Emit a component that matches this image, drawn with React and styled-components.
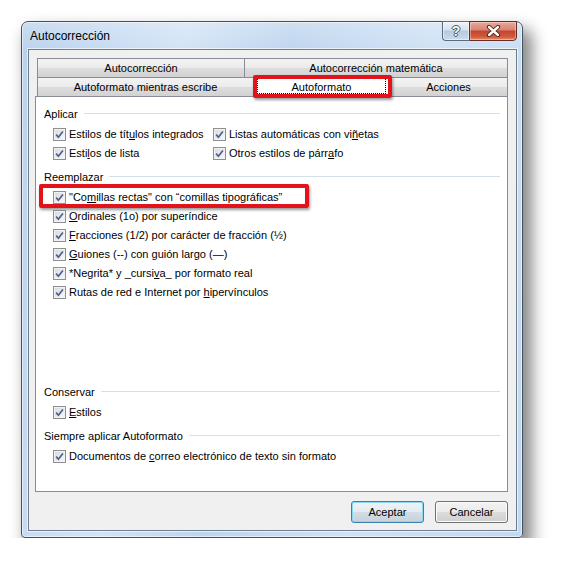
import React from 'react'
import styled, { createGlobalStyle } from 'styled-components'

const GlobalStyle = createGlobalStyle`
  html, body {
    margin: 0;
    background: #fff;
  }
  body {
    font-family: "Liberation Sans", Arial, sans-serif;
    color: #000;
  }
`

const topTabs = [
  { label: 'Autocorrección', width: 208 },
  { label: 'Autocorrección matemática', width: 264 }
]

const bottomTabs = [
  { label: 'Autoformato mientras escribe', width: 217 },
  { label: 'Autoformato', width: 137, selected: true },
  { label: 'Acciones', width: 119 }
]

const Check = () => (
  <Box>
    <svg width="11" height="11" viewBox="0 0 11 11">
      <path d="M2.2 5.6 L4.4 8.2 L8.9 2.4" fill="none" stroke="#4b5f97" strokeWidth="1.7" />
    </svg>
  </Box>
)

const CheckItem = ({ highlighted, children }) => (
  <Row $highlighted={highlighted}>
    <Check />
    <Label>{children}</Label>
  </Row>
)

const Group = ({ title, minHeight, children }) => (
  <Section style={minHeight ? { minHeight } : undefined}>
    <Heading>
      <span>{title}</span>
      <Rule />
    </Heading>
    {children}
  </Section>
)

const App = () => (
  <>
    <GlobalStyle />
    <Page>
      <Window>
        <TitleBar>
          <Title>Autocorrección</Title>
          <Caption>
            <HelpButton>?</HelpButton>
            <CloseButton>
              <svg width="15" height="12" viewBox="0 0 15 12">
                <path d="M3 2 L12 10 M12 2 L3 10" stroke="#4a1c16" strokeWidth="4.2" strokeLinecap="round" />
                <path d="M3 2 L12 10 M12 2 L3 10" stroke="#fff" strokeWidth="2.4" strokeLinecap="round" />
              </svg>
            </CloseButton>
          </Caption>
        </TitleBar>

        <Client>
          <TabRow>
            {topTabs.map(tab => (
              <Tab key={tab.label} $width={tab.width}>{tab.label}</Tab>
            ))}
          </TabRow>
          <TabRow>
            {bottomTabs.map(tab => (
              <Tab key={tab.label} $width={tab.width} $selected={tab.selected}>
                {tab.label}
              </Tab>
            ))}
          </TabRow>

          <Panel>
            <Group title="Aplicar">
              <Columns>
                <CheckItem>Estilos de tít<u>u</u>los integrados</CheckItem>
                <CheckItem>Listas automáticas con vi<u>ñ</u>etas</CheckItem>
                <CheckItem>Esti<u>l</u>os de lista</CheckItem>
                <CheckItem>Otros estilos de párr<u>a</u>fo</CheckItem>
              </Columns>
            </Group>

            <Group title="Reemplazar" minHeight={211}>
              <CheckItem highlighted>"Co<u>m</u>illas rectas" con “comillas tipográficas”</CheckItem>
              <CheckItem><u>O</u>rdinales (1o) por superíndice</CheckItem>
              <CheckItem><u>F</u>racciones (1/2) por carácter de fracción (½)</CheckItem>
              <CheckItem><u>G</u>uiones (--) con guión largo (—)</CheckItem>
              <CheckItem>*Negrita* y _cursi<u>v</u>a_ por formato real</CheckItem>
              <CheckItem>Rutas de red e Internet por <u>h</u>ipervínculos</CheckItem>
            </Group>

            <Group title="Conservar">
              <CheckItem><u>E</u>stilos</CheckItem>
            </Group>

            <Group title="Siempre aplicar Autoformato">
              <CheckItem>Documentos de <u>c</u>orreo electrónico de texto sin formato</CheckItem>
            </Group>
          </Panel>

          <Footer>
            <Button $default>Aceptar</Button>
            <Button>Cancelar</Button>
          </Footer>
        </Client>
      </Window>
    </Page>
  </>
)

const Page = styled.div`
  padding: 21px 0 0 21px;
`

const Window = styled.div`
  box-sizing: border-box;
  width: 502px;
  height: 517px;
  display: flex;
  flex-direction: column;
  border: 1px solid #46515e;
  border-radius: 7px 7px 4px 4px;
  background:
    linear-gradient(rgba(255, 255, 255, 0.25), rgba(255, 255, 255, 0) 30px),
    linear-gradient(100deg, #b9d2ed 0%, #d2e3f6 28%, #bed5ee 46%, #cfe1f5 70%, #c3d9f1 100%);
  box-shadow:
    inset 0 0 0 1px rgba(255, 255, 255, 0.55),
    7px 10px 16px 2px rgba(0, 0, 0, 0.48);
`

const TitleBar = styled.div`
  height: 27px;
  display: flex;
  align-items: center;
  justify-content: space-between;
  padding-left: 8px;
`

const Title = styled.span`
  font-size: 12px;
  padding-top: 1px;
`

const Caption = styled.div`
  display: flex;
  align-self: flex-start;
  margin-top: -1px;
  margin-right: 5px;
`

const HelpButton = styled.div`
  box-sizing: border-box;
  width: 27px;
  height: 20px;
  display: flex;
  align-items: center;
  justify-content: center;
  border: 1px solid #5d6b7c;
  border-right: none;
  border-radius: 0 0 0 4px;
  background: linear-gradient(#eef3f9, #d6e1ee 45%, #b8c9dd 50%, #c9dbef 100%);
  box-shadow: inset 0 0 0 1px rgba(255, 255, 255, 0.5);
  font-size: 14px;
  font-weight: bold;
  color: #f4f6f8;
  text-shadow:
    1px 0 0 #4d5a6a, -1px 0 0 #4d5a6a, 0 1px 0 #4d5a6a, 0 -1px 0 #4d5a6a;
`

const CloseButton = styled.div`
  box-sizing: border-box;
  width: 48px;
  height: 20px;
  display: flex;
  align-items: center;
  justify-content: center;
  border: 1px solid #6b2a22;
  border-radius: 0 0 4px 0;
  background: linear-gradient(#e9a898, #d98371 45%, #c4432f 50%, #cc5a3d 80%, #e3905f 100%);
  box-shadow: inset 0 0 0 1px rgba(255, 255, 255, 0.35);
`

const Client = styled.div`
  flex: 1;
  display: flex;
  flex-direction: column;
  margin: 0 5px 6px 6px;
  padding: 8px 8px 7px 6px;
  border: 1px solid #6f7e8e;
  background: #f0f0f0;
  box-shadow: 0 0 0 1px rgba(255, 255, 255, 0.6);
`

const TabRow = styled.div`
  display: flex;
  padding-left: 2px;
`

const Tab = styled.div`
  position: relative;
  box-sizing: border-box;
  flex: none;
  width: ${p => p.$width}px;
  height: ${p => (p.$selected ? 20 : 19)}px;
  margin-bottom: ${p => (p.$selected ? -1 : 0)}px;
  border: 1px solid #898c95;
  border-bottom: none;
  background: ${p =>
    p.$selected
      ? '#fff'
      : 'linear-gradient(#f3f3f3, #ebebeb 50%, #dedede 50%, #d2d2d2)'};
  z-index: ${p => (p.$selected ? 2 : 0)};
  font-size: 11px;
  line-height: 18px;
  text-align: center;
  white-space: nowrap;

  & + & {
    margin-left: -1px;
  }

  ${p =>
    p.$selected &&
    `
    &::before {
      content: '';
      position: absolute;
      inset: 0 3px 3px 3px;
      border: 1px dotted #000;
    }
    &::after {
      content: '';
      position: absolute;
      top: -3px;
      bottom: -1px;
      left: -1px;
      right: -3px;
      border: 4px solid #e3131b;
      border-radius: 2px;
      box-shadow: 1px 2px 3px rgba(0, 0, 0, 0.4);
      pointer-events: none;
    }
  `}
`

const Panel = styled.div`
  box-sizing: border-box;
  height: 396px;
  padding: 7px 7px 0 8px;
  border: 1px solid #898c95;
  background: #fff;
  font-size: 11px;
`

const Section = styled.div`
  & + & {
    margin-top: 4px;
  }
`

const Heading = styled.div`
  display: flex;
  align-items: center;
  gap: 6px;
  height: 19px;
  margin-bottom: 2px;
`

const Rule = styled.div`
  flex: 1;
  height: 1px;
  background: #d5dfe8;
`

const Columns = styled.div`
  display: grid;
  grid-template-columns: 160px auto;
`

const Row = styled.div`
  position: relative;
  display: flex;
  align-items: center;
  gap: 3px;
  width: fit-content;
  height: 19px;
  margin-left: 9px;
  white-space: nowrap;

  ${p =>
    p.$highlighted &&
    `
    &::after {
      content: '';
      position: absolute;
      top: -4px;
      bottom: -1px;
      left: -14px;
      right: -27px;
      border: 4px solid #e3131b;
      border-radius: 2px;
      box-shadow: 1px 2px 3px rgba(0, 0, 0, 0.4);
      pointer-events: none;
    }
  `}
`

const Box = styled.span`
  box-sizing: border-box;
  flex: none;
  width: 13px;
  height: 13px;
  display: flex;
  align-items: center;
  justify-content: center;
  border: 1px solid #8e8f8f;
  background: linear-gradient(135deg, #d8d8d8, #fafafa);
  box-shadow: inset 0 0 0 1px #f2f2f2;
`

const Label = styled.span`
  line-height: 19px;

  u {
    text-underline-offset: 1px;
  }
`

const Footer = styled.div`
  display: flex;
  justify-content: flex-end;
  gap: 11px;
  padding-top: 9px;
`

const Button = styled.div`
  box-sizing: border-box;
  width: 73px;
  height: 22px;
  display: flex;
  align-items: center;
  justify-content: center;
  border: 1px solid ${p => (p.$default ? '#3c7fb1' : '#707070')};
  border-radius: 3px;
  background: ${p =>
    p.$default
      ? 'linear-gradient(#eef4f8, #e3ebf0 50%, #d3dde4 50%, #c6d2da)'
      : 'linear-gradient(#f2f2f2, #ebebeb 50%, #dddddd 50%, #cfcfcf)'};
  box-shadow: inset 0 0 0 1px ${p => (p.$default ? '#8fd6f3' : '#fcfcfc')};
  font-size: 11px;
`

export default App
